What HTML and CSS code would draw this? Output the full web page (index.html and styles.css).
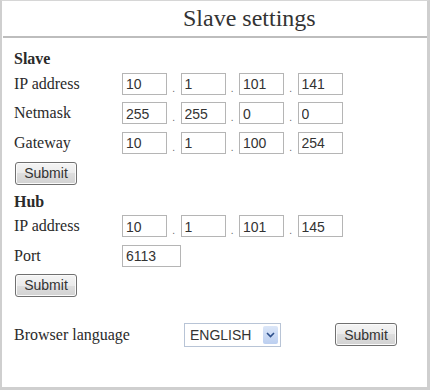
FILE: index.html
```html
<!DOCTYPE html>
<html lang="en">
<head>
  <meta charset="UTF-8">
  <link rel="stylesheet" href="styles.css">
  <title>Slave settings</title>
</head>
<body>
  <div class="frame">
    <div class="header">
      <h1 class="title">Slave settings</h1>
    </div>

    <form class="section" id="slaveForm">
      <div class="section-title">Slave</div>
      <div class="row">
        <label class="label">IP address</label>
        <div class="ip">
          <input type="text" value="10"><span class="dot">.</span>
          <input type="text" value="1"><span class="dot">.</span>
          <input type="text" value="101"><span class="dot">.</span>
          <input type="text" value="141">
        </div>
      </div>
      <div class="row">
        <label class="label">Netmask</label>
        <div class="ip">
          <input type="text" value="255"><span class="dot">.</span>
          <input type="text" value="255"><span class="dot">.</span>
          <input type="text" value="0"><span class="dot">.</span>
          <input type="text" value="0">
        </div>
      </div>
      <div class="row">
        <label class="label">Gateway</label>
        <div class="ip">
          <input type="text" value="10"><span class="dot">.</span>
          <input type="text" value="1"><span class="dot">.</span>
          <input type="text" value="100"><span class="dot">.</span>
          <input type="text" value="254">
        </div>
      </div>
      <button type="submit" class="btn">Submit</button>
    </form>

    <form class="section hub" id="hubForm">
      <div class="section-title">Hub</div>
      <div class="row">
        <label class="label">IP address</label>
        <div class="ip">
          <input type="text" value="10"><span class="dot">.</span>
          <input type="text" value="1"><span class="dot">.</span>
          <input type="text" value="101"><span class="dot">.</span>
          <input type="text" value="145">
        </div>
      </div>
      <div class="row">
        <label class="label">Port</label>
        <input type="text" class="port" value="6113">
      </div>
      <button type="submit" class="btn">Submit</button>
    </form>

    <form class="lang-row" id="langForm">
      <label class="lang-label">Browser language</label>
      <div class="select">
        <span class="select-text">ENGLISH</span>
        <span class="select-arrow">
          <svg width="9" height="6" viewBox="0 0 9 6"><path d="M1 1 L4.5 4.5 L8 1" fill="none" stroke="#2d4f8a" stroke-width="1.6"/></svg>
        </span>
      </div>
      <button type="submit" class="btn">Submit</button>
    </form>
  </div>
</body>
</html>
```

FILE: styles.css
```css
body {
  margin: 0;
  background: #fff;
}

.frame {
  width: 430px;
  height: 390px;
  box-sizing: border-box;
  border-left: 2px solid #cfcfcf;
  border-top: 1px solid #d6d6d6;
  border-right: 3px solid #cfcfcf;
  border-bottom: 3px solid #cfcfcf;
  font-family: "Liberation Serif", "Times New Roman", serif;
  color: #2a2a2a;
}

.header {
  height: 35px;
  margin-left: 1px;
  border-bottom: 2px solid #bdbdbd;
  padding-left: 180px;
}

.title {
  margin: 0;
  font-weight: normal;
  font-size: 24px;
  line-height: 35px;
  color: #333;
}

.section {
  margin: 0;
  padding-left: 12px;
}

.section-title {
  font-weight: bold;
  font-size: 16px;
  line-height: 20px;
  margin-top: 11px;
}

.hub .section-title {
  margin-top: 7px;
}

.row {
  display: flex;
  align-items: center;
  height: 29.5px;
}

.label {
  width: 108px;
  font-size: 16px;
}

.ip {
  display: flex;
  align-items: center;
}

.ip input, .port {
  width: 45px;
  height: 22px;
  box-sizing: border-box;
  border: 1px solid #b5b5b5;
  padding: 1px 3px 0;
  font-family: "Liberation Sans", Arial, sans-serif;
  font-size: 14px;
  color: #333;
  outline: none;
}

.port {
  width: 59px;
}

.dot {
  width: 13.5px;
  text-align: center;
  font-family: "Liberation Sans", Arial, sans-serif;
  font-size: 10px;
  color: #666;
  align-self: flex-end;
  line-height: 13px;
}

.btn {
  display: block;
  width: 62px;
  height: 23px;
  padding: 0;
  border: 1px solid #707070;
  border-radius: 3px;
  background: linear-gradient(#f4f4f4, #ebebeb 50%, #dedede 50%, #d2d2d2);
  box-shadow: inset 0 0 0 1px #fbfbfb;
  font-family: "Liberation Sans", Arial, sans-serif;
  font-size: 14px;
  color: #333;
  cursor: pointer;
}

.section .btn {
  margin-left: 1px;
  margin-top: 4px;
}

.hub .btn {
  margin-top: 3px;
}

.lang-row {
  display: flex;
  align-items: center;
  margin: 26px 0 0;
  padding-left: 12px;
  height: 24px;
}

.lang-label {
  width: 170px;
  font-size: 16px;
}

.select {
  display: flex;
  align-items: center;
  width: 97px;
  height: 24px;
  box-sizing: border-box;
  border: 1px solid #b8c4d6;
  padding: 2px 2px 2px 5px;
  font-family: "Liberation Sans", Arial, sans-serif;
  font-size: 14px;
  color: #333;
}

.select-text {
  flex: 1;
}

.select-arrow {
  display: flex;
  align-items: center;
  justify-content: center;
  width: 15px;
  height: 18px;
  background: linear-gradient(#dbe6f8, #bccff0);
  border-radius: 2px;
}

.lang-row .btn {
  margin-left: 54px;
}
```
